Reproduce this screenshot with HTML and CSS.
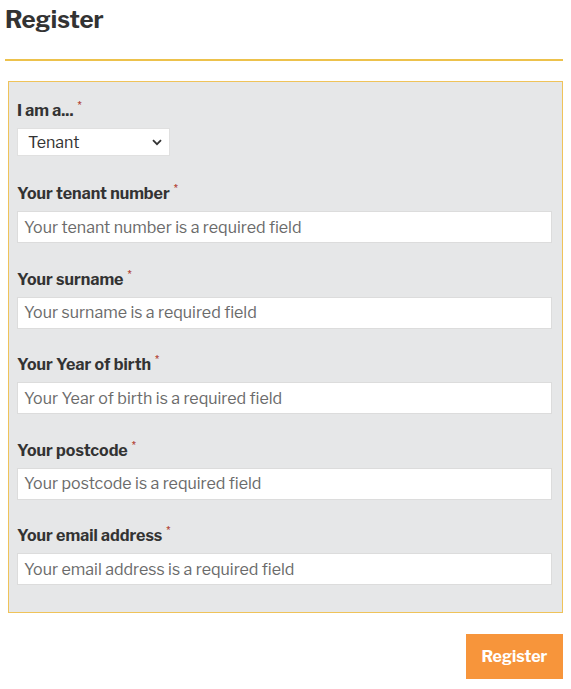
FILE: index.html
```html
<!DOCTYPE html>
<html lang="en">
<head>
<meta charset="utf-8">
<title>Register</title>
<link rel="stylesheet" href="styles.css">
</head>
<body>
<div class="page">
  <h1 class="title">Register</h1>
  <hr class="rule">
  <form class="form">
    <div class="panel">
      <div class="field field-select">
        <label class="label">I am a...<span class="req">*</span></label>
        <div class="select-wrap">
          <select class="select"><option>Tenant</option></select>
          <svg class="chev" width="10" height="7" viewBox="0 0 10 7"><path d="M1 1.2 L5 5.2 L9 1.2" fill="none" stroke="#333" stroke-width="1.8"/></svg>
        </div>
      </div>
      <div class="field">
        <label class="label">Your tenant number<span class="req">*</span></label>
        <input class="input" type="text" placeholder="Your tenant number is a required field">
      </div>
      <div class="field">
        <label class="label">Your surname<span class="req">*</span></label>
        <input class="input" type="text" placeholder="Your surname is a required field">
      </div>
      <div class="field">
        <label class="label">Your Year of birth<span class="req">*</span></label>
        <input class="input" type="text" placeholder="Your Year of birth is a required field">
      </div>
      <div class="field">
        <label class="label">Your postcode<span class="req">*</span></label>
        <input class="input" type="text" placeholder="Your postcode is a required field">
      </div>
      <div class="field">
        <label class="label">Your email address<span class="req">*</span></label>
        <input class="input" type="text" placeholder="Your email address is a required field">
      </div>
    </div>
    <div class="actions">
      <button class="btn" type="button">Register</button>
    </div>
  </form>
</div>
</body>
</html>
```
FILE: styles.css
```css
html, body {
  margin: 0;
  padding: 0;
  background: #fff;
}
body {
  font-family: "Libre Franklin", "Open Sans", "Liberation Sans", sans-serif;
  color: #333;
}
.page {
  padding: 0 8px 0 5px;
}
.title {
  margin: 0;
  padding-top: 5px;
  font-size: 24px;
  line-height: 30px;
  font-weight: 700;
  color: #333;
}
.rule {
  margin: 24px 0 0 0;
  border: 0;
  height: 2px;
  background: #edc24c;
}
.form {
  margin: 20px 0 0 3px;
}
.panel {
  background: #e6e7e8;
  border: 1px solid #efc35a;
  padding: 19px 10px 27px 8px;
}
.field {
  display: flex;
  flex-direction: column;
  align-items: flex-start;
  margin-bottom: 26.5px;
}
.field:last-child {
  margin-bottom: 0;
}
.field-select {
  margin-bottom: 28px;
}
.label {
  font-size: 16px;
  line-height: 20px;
  font-weight: 700;
  color: #333;
  margin-bottom: 7px;
}
.req {
  color: #b03a2e;
  font-size: 9px;
  vertical-align: top;
  position: relative;
  top: -6px;
  margin-left: 4px;
}
.select-wrap {
  position: relative;
  width: 153px;
  height: 28px;
}
.select {
  appearance: none;
  -webkit-appearance: none;
  display: block;
  width: 153px;
  height: 28px;
  border: 1px solid #e0e0e0;
  background: #fff;
  font-family: inherit;
  font-size: 16px;
  color: #333;
  padding: 0 0 0 10px;
  margin: 0;
  border-radius: 0;
}
.chev {
  position: absolute;
  right: 8px;
  top: 11px;
  pointer-events: none;
}
.input {
  display: block;
  width: 100%;
  box-sizing: border-box;
  height: 32px;
  border: 1px solid #dcdcdc;
  background: #fff;
  font-family: inherit;
  font-size: 16px;
  padding: 0 6px;
  margin: 0;
  color: #333;
}
.input::placeholder {
  color: #6b6b6b;
}
.actions {
  display: flex;
  justify-content: flex-end;
  margin-top: 21px;
}
.btn {
  width: 97px;
  height: 45px;
  border: 0;
  background: #f7953b;
  color: #fff;
  font-family: inherit;
  font-size: 16px;
  font-weight: 700;
  cursor: pointer;
}
```
